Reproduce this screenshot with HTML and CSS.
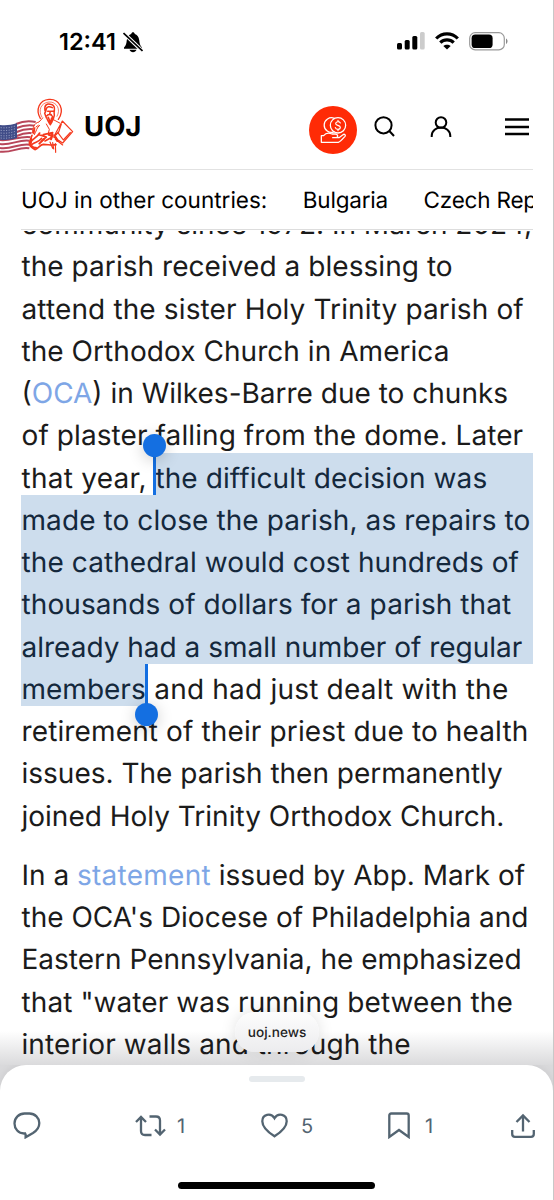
FILE: index.html
```
<!DOCTYPE html>
<html lang="en">
<head>
    <meta charset="UTF-8">
    <meta name="viewport" content="width=device-width, initial-scale=1.0">
    <title>UOJ</title>
    <link rel="stylesheet" href="styles.css">
</head>
<body>
    <div class="phone">
        <div class="top">
            <div class="status-bar">
                <span class="time">12:41</span>
                <svg class="bell" width="20" height="21" viewBox="0 0 20 21">
                    <path d="M1 15.500C3 13.500 3.500 11.500 3.800 8C4.200 5 6 2.500 8.200 2C8.700-.2 11.300-.2 11.800 2C14 2.500 15.800 5 16.200 8C16.500 11.500 17 13.500 19 15.500V16.800H1Z"/>
                    <path d="M6.500 17.800H13.500C12.500 21 7.500 21 6.500 17.800Z"/>
                    <path d="M0 .5L20 19.500" stroke="#fff" stroke-width="3.800"/>
                    <path d="M.5 1L19.500 19" stroke="#000" stroke-width="1.700"/>
                </svg>
                <svg class="signal" width="28" height="18" viewBox="0 0 28 18">
                    <rect x="0" y="11" width="5" height="6.500" rx="1.500"/>
                    <rect x="7.700" y="8" width="5" height="9.500" rx="1.500"/>
                    <rect x="15.300" y="4" width="5" height="13.500" rx="1.500"/>
                    <rect x="23" y="0" width="4.700" height="17.500" rx="1.500" fill="#ccc"/>
                </svg>
                <svg class="wifi" width="24" height="18" viewBox="0 0 24 18">
                    <g fill="none" stroke="#000" stroke-width="3.200">
                        <path d="M1.200 6.500C7.200.3 16.800.3 22.800 6.500"/>
                        <path d="M5.300 10.700C9 7 15 7 18.700 10.700"/>
                    </g>
                    <path d="M12 17.600L8.300 14C10.400 12.200 13.600 12.200 15.700 14Z"/>
                </svg>
                <svg class="battery" width="39" height="19" viewBox="0 0 39 19">
                    <rect x=".7" y=".7" width="34.600" height="17.200" rx="5.500" fill="none" stroke="#999" stroke-width="1.200"/>
                    <rect x="2.600" y="2.600" width="21" height="13.400" rx="3.600"/>
                    <path d="M37 6.500C39 7.500 39 11 37 12Z" fill="#888"/>
                </svg>
            </div>

            <header class="header">
                <svg class="logo" width="75" height="60" viewBox="0 0 225 180">
                    <!-- flag -->
                    <path d="M0 93C35 95 58 75 108 81L101 150C60 142 45 175 0 170Z" fill="#fff"/>
                    <g fill="none" stroke="#b8465a" stroke-width="6">
                        <path d="M48 87C66 79 84 76 107 81"/>
                        <path d="M50 99C68 91 84 89 105 92"/>
                        <path d="M50 111C68 103 84 101 103 103"/>
                        <path d="M50 123C68 115 84 113 98 115"/>
                        <path d="M0 135C34 139 60 121 94 127"/>
                        <path d="M0 147C34 152 58 131 93 138"/>
                        <path d="M0 159C34 165 58 143 90 149"/>
                        <path d="M0 170C34 175 58 154 88 160"/>
                    </g>
                    <path d="M0 90C18 92 34 90 51 85V129C34 135 18 136 0 134Z" fill="#404c88"/>
                    <path d="M2 98C20 100 34 97 49 92M2 106C20 108 34 105 49 100M2 114C20 116 34 113 49 108M2 122C20 124 34 121 49 116M2 129C20 131 34 128 49 123" fill="none" stroke="#b4bad6" stroke-width="2.500" stroke-dasharray="3 5"/>
                    <!-- saint -->
                    <path d="M119 79C101 84 97 108 91 127C85 145 88 157 101 164L153 168L218 110L188 77L166 79Z" fill="#fff"/>
                    <g fill="none" stroke="#f5381c" stroke-linecap="round" stroke-linejoin="round">
                        <path d="M121 70C106 46 117 15 147 13C179 11 195 44 175 73" stroke-width="4"/>
                        <path d="M126 67C113 46 123 23 147 21C171 20 183 44 171 64" stroke-width="2"/>
                        <path d="M135 47C132 29 142 25 151 28C162 29 165 37 163 49M138 45C140 33 149 34 157 38M138 47L134 55L139 68M162 47L163 61L159 75M143 49H148M154 49H159M151 49L149 57L154 59M141 62C147 55 158 61 158 67M140 68C142 76 146 80 149 87M158 70C158 82 155 85 151 89M145 67L151 83L155 69" stroke-width="4.500"/>
                        <path d="M128 69L117 81C101 85 99 97 97 114M119 91C110 96 109 110 103 119M162 75L179 84M139 87L148 103L145 115M108 96L115 91" stroke-width="3"/>
                        <path d="M96 121L88 143C88 155 96 158 105 164C115 161 119 149 130 148C144 148 155 152 168 149M91 143C100 129 111 128 119 114M96 148C108 140 116 142 125 130M117 119L139 126L126 137M130 119L158 113L153 128L135 138" stroke-width="5"/>
                        <path d="M187 78L218 110L188 144L161 126L169 111ZM184 87L176 111L161 126M173 112L190 135L211 112M150 115L166 123L173 134M166 133L188 150M150 141L158 160M166 146L167 172M158 143L161 162" stroke-width="3.500"/>
                        <path d="M103 100L101 114M94 132L92 148C96 157 102 160 108 158M132 132L118 146M146 119L157 122L153 133M167 128L172 138" stroke-width="6"/>
                    </g>
                </svg>
                <span class="brand">UOJ</span>
                <div class="donate">
                    <svg width="48" height="48" viewBox="0 0 144 144" fill="none" stroke="#fff" stroke-width="3.800" stroke-linejoin="round" stroke-linecap="round">
                        <path d="M76 37A22 22 0 1 0 75 78"/>
                        <circle cx="87" cy="58" r="23"/>
                        <path d="M94 51C91 45 80 46 80 53C80 59 94 57 94 64C94 72 81 72 79 65M87 43V47M87 70V74" stroke-width="3.500"/>
                        <path d="M37 89V109H88C95 107 101 99 108 91C111 86 106 83 102 86L90 95H71H81C90 94 86 84 79 84H69C59 80 51 80 44 89ZM71 95H84"/>
                    </svg>
                </div>
                <svg class="search" width="22" height="22" viewBox="0 0 22 22" fill="none" stroke="#000" stroke-width="2">
                    <circle cx="9.500" cy="9.300" r="8.100"/>
                    <path d="M15.300 15L20 20"/>
                </svg>
                <svg class="user" width="22" height="22" viewBox="0 0 22 22" fill="none" stroke="#000" stroke-width="2">
                    <circle cx="11" cy="6.500" r="5.300"/>
                    <path d="M1.700 21V20C1.700 8.800 20.300 8.800 20.300 20V21"/>
                </svg>
                <svg class="menu" width="24" height="18" viewBox="0 0 24 18">
                    <path d="M0 1.500H24M0 9H24M0 16H24" stroke="#000" stroke-width="2.500"/>
                </svg>
            </header>

            <nav class="countries">
                <span class="countries-label">UOJ in other countries:</span>
                <a>Bulgaria</a>
                <a>Czech Republic</a>
            </nav>
        </div>

        <main class="article">
            <div class="text">
                <div class="line"><span>community since 1972. In March 2024,</span></div>
                <div class="line track-1"><span>the parish received a blessing to</span></div>
                <div class="line track-3"><span>attend the sister Holy Trinity parish of</span></div>
                <div class="line track-1"><span>the Orthodox Church in America</span></div>
                <div class="line"><span>(<a>OCA</a>) in Wilkes-Barre due to chunks</span></div>
                <div class="line track-2"><span>of plaster falling from the dome. Later</span></div>
                <div class="line track-2"><span class="track-5">that year, </span><mark class="grow"><i class="handle start"></i>the difficult decision was</mark></div>
                <div class="line track-2"><mark class="grow">made to close the parish, as repairs to</mark></div>
                <div class="line track-2"><mark class="grow">the cathedral would cost hundreds of</mark></div>
                <div class="line track-2"><mark class="grow">thousands of dollars for a parish that</mark></div>
                <div class="line"><mark class="grow">already had a small number of regular</mark></div>
                <div class="line track-4"><mark class="track-0">members<i class="handle end"></i></mark><span> and had just dealt with the</span></div>
                <div class="line track-3"><span>retirement of their priest due to health</span></div>
                <div class="line"><span>issues. The parish then permanently</span></div>
                <div class="line"><span>joined Holy Trinity Orthodox Church.</span></div>
            </div>
            <div class="text">
                <div class="line"><span>In a <a class="track-5">statement</a> issued by Abp. Mark of</span></div>
                <div class="line"><span>the OCA's Diocese of Philadelphia and</span></div>
                <div class="line"><span>Eastern Pennsylvania, he emphasized</span></div>
                <div class="line track-2"><span>that "water was running between the</span></div>
                <div class="line track-2"><span>interior walls and through the</span></div>
            </div>
        </main>

        <div class="url-pill">uoj.news</div>

        <footer class="sheet">
            <div class="grabber"></div>
            <div class="actions">
                <div class="action reply">
                    <svg width="28" height="27" viewBox="0 0 28 27">
                        <path d="M13 21.500H11C5.500 21.500 1.500 17 1.500 11.500C1.500 6 6 1.500 11.500 1.500H16.500C22 1.500 26.300 6 26.300 11C26.300 16 24 18.500 20 21L12.600 25.300V21.500Z"/>
                    </svg>
                </div>
                <div class="action repost">
                    <svg width="31" height="24" viewBox="0 0 31 24">
                        <path d="M1 8L6 3L11 8M6 3.500V17Q6 21 10 21H16.500M14.500 2.500H21Q25 2.500 25 6.500V20M20 15.500L25 20.500L30 15.500"/>
                    </svg>
                    <span>1</span>
                </div>
                <div class="action like">
                    <svg width="27" height="25" viewBox="0 0 27 25">
                        <path d="M13.500 23.300C6.500 18.800 1.300 14 1.300 8.200C1.300 1.300 9.800-.9 13.500 5.200C17.200-.9 25.700 1.300 25.700 8.200C25.700 14 20.500 18.800 13.500 23.300Z"/>
                    </svg>
                    <span>5</span>
                </div>
                <div class="action save">
                    <svg width="22" height="27" viewBox="0 0 22 27">
                        <path d="M1.300 25V3.500Q1.300 1.500 3.300 1.500H18.700Q20.700 1.500 20.700 3.500V25L11 18Z"/>
                    </svg>
                    <span>1</span>
                </div>
                <div class="action share">
                    <svg width="24" height="26" viewBox="0 0 24 26">
                        <path d="M12 18.500V2.500M5.500 9L12 2.500L18.500 9M1.200 17V21Q1.200 23.800 4 23.800H20Q22.800 23.800 22.800 21V17"/>
                    </svg>
                </div>
            </div>
            <div class="home-bar"></div>
        </footer>
    </div>
</body>
</html>
```
FILE: styles.css
```
* {
    box-sizing: border-box;
}
body {
    margin: 0;
    background: #fff;
    color: #1b1b1b;
    font-family: Inter, "Liberation Sans", sans-serif;
    text-rendering: geometricPrecision;
}
svg {
    display: block;
    flex: none;
}
.phone {
    position: relative;
    display: flex;
    flex-direction: column;
    width: 554px;
    height: 1200px;
    overflow: hidden;
    border-right: 1px solid #c8c8c8;
}

/* Status bar and site header */
.top {
    position: relative;
    z-index: 2;
    flex: none;
    height: 231px;
    background: #fff;
    color: #000;
}
.status-bar {
    display: flex;
    height: 84px;
    padding: 32px 0 0 59px;
}
.time {
    width: 60px;
    margin-right: 4px;
    font-size: 23.5px;
    font-weight: 600;
    line-height: 19px;
    white-space: nowrap;
}
.signal {
    margin-left: 254px;
}
.wifi {
    margin-left: 10px;
}
.battery {
    margin-left: 10px;
}
.header {
    display: flex;
    align-items: center;
    height: 86px;
}
.logo {
    margin-top: -5px;
}
.brand {
    width: 60px;
    margin: -2px 0 0 9px;
    font-size: 27.5px;
    font-weight: 700;
}
.donate {
    width: 48px;
    height: 48px;
    margin: 5px 0 0 164.5px;
    border-radius: 50%;
    background: #ff2b06;
}
.search {
    margin-left: 17.5px;
}
.user {
    margin-left: 34px;
}
.menu {
    margin-left: 53px;
}
.countries {
    display: flex;
    height: 61px;
    margin: -1px 20px 0 21px;
    border-top: 1px solid #e2e2e2;
    border-bottom: 1px solid #ddd;
    font-size: 22.5px;
    line-height: 62px;
    white-space: nowrap;
    overflow: hidden;
}
.countries a {
    margin-left: 35.5px;
    letter-spacing: -0.2px;
}

/* Article */
.article {
    flex: none;
    height: 866px;
    margin-top: -31.8px;
    padding: 0 20px 0 21px;
    background: linear-gradient(#fff 832px, #d6d6d8 870px);
}
.text {
    margin-bottom: 17px;
}
/* glyphs sit slightly low in the line, so the selection starts above them */
.line {
    display: flex;
    height: 42.25px;
    line-height: 51px;
    font-size: 28px;
    white-space: pre;
    text-indent: 0.5px;
}
.line a {
    color: #7ea6e6;
}
.track-0 {
    letter-spacing: 0;
}
.track-1 {
    letter-spacing: 0.05px;
}
.track-2 {
    letter-spacing: 0.09px;
}
.track-3 {
    letter-spacing: 0.13px;
}
.track-4 {
    letter-spacing: 0.2px;
}
.track-5 {
    letter-spacing: 0.25px;
}
mark {
    position: relative;
    height: 42.4px;
    background: #cddded;
    color: #14283c;
}
.grow {
    flex: 1;
}
.handle {
    position: absolute;
    top: 0;
    width: 3px;
    height: 43px;
    background: #146fe1;
}
.handle::after {
    content: "";
    position: absolute;
    left: -10px;
    width: 23px;
    height: 23px;
    border-radius: 50%;
    background: #146fe1;
    box-shadow: 0 3px 16px rgba(0, 0, 0, 0.2);
}
.start {
    left: -2px;
}
.start::after {
    top: -19px;
}
.end {
    right: -2.5px;
}
.end::after {
    top: 39px;
}

.url-pill {
    position: absolute;
    left: 235px;
    top: 1012px;
    width: 84px;
    height: 40px;
    border-radius: 20px;
    background: linear-gradient(#fdfdfd, #ececee);
    box-shadow: 0 0 16px rgba(0, 0, 0, 0.12);
    color: #222;
    font-size: 13.6px;
    font-weight: 500;
    line-height: 43px;
    text-align: center;
}

/* Bottom sheet */
.sheet {
    position: absolute;
    left: 0;
    right: 0;
    bottom: 0;
    height: 135px;
    padding-top: 11px;
    border-radius: 26px 26px 0 0;
    background: #fff;
    box-shadow: 0 0 8px rgba(0, 0, 0, 0.08), 0 0 0 30px #d9d9db;
    clip-path: inset(0);
}
.grabber {
    width: 56px;
    height: 6px;
    margin: 0 auto;
    border-radius: 3px;
    background: #e6eaed;
}
.actions {
    display: flex;
    align-items: center;
    height: 84px;
    padding: 3px 0 0 13px;
}
.action {
    display: flex;
    align-items: center;
    color: #536471;
    font-size: 20px;
}
.action svg {
    fill: none;
    stroke: #536471;
    stroke-width: 2.3;
}
.reply {
    width: 122px;
}
.repost {
    width: 126px;
    gap: 11px;
}
.like {
    width: 127px;
    gap: 13px;
}
.save {
    width: 123px;
    gap: 15px;
}
.home-bar {
    width: 197px;
    height: 7px;
    margin: 16px auto 0;
    border-radius: 4px;
    background: #000;
}
```
